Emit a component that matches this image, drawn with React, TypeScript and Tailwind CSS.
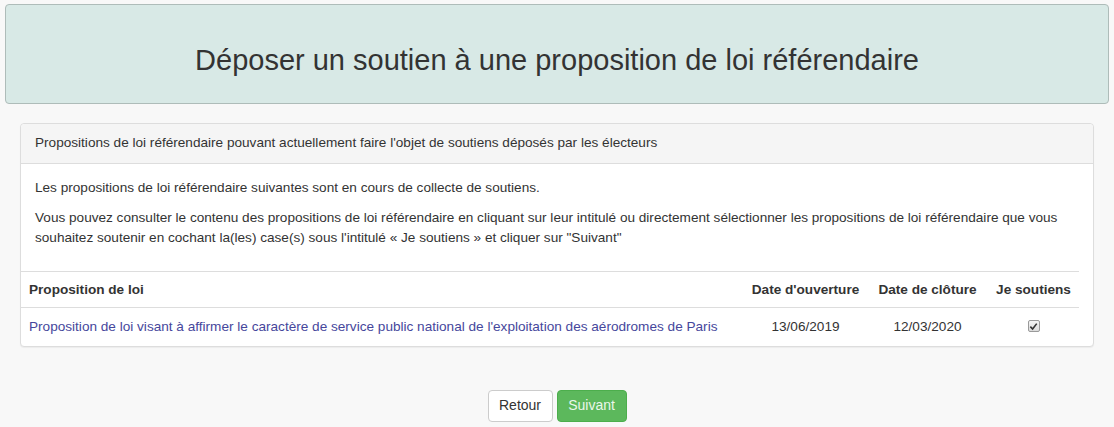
import React from 'react';

const rows = [
  {
    title:
      "Proposition de loi visant à affirmer le caractère de service public national de l'exploitation des aérodromes de Paris",
    opening: '13/06/2019',
    closing: '12/03/2020',
  },
];

// Old-style grey checkbox, checked
const CheckMark = () => (
  <span className="inline-flex items-center justify-center w-[12px] h-[12px] border border-[#9a9a9a] rounded-[2px] bg-gradient-to-b from-[#f4f4f4] to-[#dcdcdc]">
    <svg width="9" height="9" viewBox="0 0 10 10">
      <path d="M1.5 5.2 L4 7.8 L8.6 1.8" fill="none" stroke="#333" strokeWidth="1.8" />
    </svg>
  </span>
);

export default function App() {
  return (
    <div
      className="min-h-[427px] bg-[#f8f8f8] pt-[4px] text-[#333]"
      style={{ fontFamily: '"Liberation Sans", Arial, sans-serif' }}
    >
      {/* page title */}
      <div className="mx-[5px] h-[100px] flex items-center justify-center bg-[#d8e9e6] border border-[#aebcb9] rounded-[4px]">
        <h1 className="text-[29px] leading-none pt-[12px]">
          Déposer un soutien à une proposition de loi référendaire
        </h1>
      </div>

      {/* panel */}
      <div className="mx-[20px] mt-[19px] bg-white border border-[#dddddd] rounded-[4px] shadow-[0_1px_1px_rgba(0,0,0,0.05)]">
        <div className="h-[40px] flex items-center px-[14px] bg-[#f5f5f5] border-b border-[#dddddd] rounded-t-[4px] text-[13.6px]">
          Propositions de loi référendaire pouvant actuellement faire l'objet de soutiens déposés par les électeurs
        </div>

        <div className="px-[14px] pt-[14px] pb-[23px] text-[13.6px] leading-[20px]">
          <p className="mb-[10px]">Les propositions de loi référendaire suivantes sont en cours de collecte de soutiens.</p>
          <p>
            Vous pouvez consulter le contenu des propositions de loi référendaire en cliquant sur leur intitulé ou directement sélectionner les propositions de loi référendaire que vous souhaitez soutenir en cochant la(les) case(s) sous l'intitulé « Je soutiens » et cliquer sur "Suivant"
          </p>
        </div>

        <table className="w-[1058px] border-collapse text-[13.6px] leading-[20px]">
          <colgroup>
            <col />
            <col className="w-[123px]" />
            <col className="w-[121px]" />
            <col className="w-[91px]" />
          </colgroup>
          <thead>
            <tr className="border-t border-b border-[#dddddd]">
              <th className="h-[36px] px-[8px] text-left font-bold">Proposition de loi</th>
              <th className="h-[36px] px-[2px] text-center font-bold whitespace-nowrap">Date d'ouverture</th>
              <th className="h-[36px] px-[2px] text-center font-bold whitespace-nowrap">Date de clôture</th>
              <th className="h-[36px] px-[2px] text-center font-bold whitespace-nowrap">Je soutiens</th>
            </tr>
          </thead>
          <tbody>
            {rows.map((row, index) => (
              <tr key={index}>
                <td className="h-[38px] px-[8px]">
                  <a href="#" className="text-[#46479c]">{row.title}</a>
                </td>
                <td className="h-[38px] text-center">{row.opening}</td>
                <td className="h-[38px] text-center">{row.closing}</td>
                <td className="h-[38px] text-center">
                  <span className="inline-flex pt-[3px]">
                    <CheckMark />
                  </span>
                </td>
              </tr>
            ))}
          </tbody>
        </table>
      </div>

      {/* actions */}
      <div className="mt-[43px] flex justify-center gap-[4px]">
        <button className="h-[32px] w-[65px] bg-white border border-[#cccccc] rounded-[4px] text-[14px] text-[#333]">
          Retour
        </button>
        <button className="h-[32px] w-[70px] bg-[#5cb85c] border border-[#4cae4c] rounded-[4px] text-[14px] text-[#eaf6ea]">
          Suivant
        </button>
      </div>
    </div>
  );
}
